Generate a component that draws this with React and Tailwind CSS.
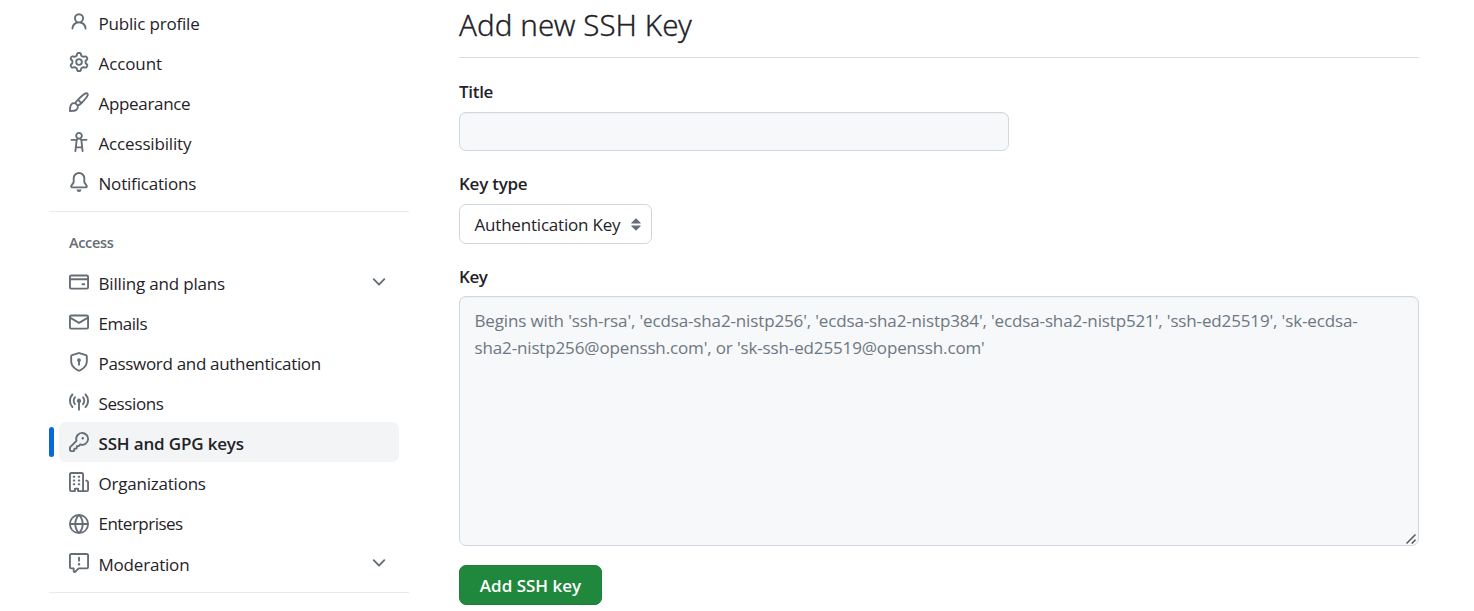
import React from "react";

const PATHS = {
  person: "M10.561 8.073a6.005 6.005 0 0 1 3.432 5.142.75.75 0 1 1-1.498.07 4.5 4.5 0 0 0-8.99 0 .75.75 0 0 1-1.498-.07 6.004 6.004 0 0 1 3.431-5.142 3.999 3.999 0 1 1 5.123 0ZM10.5 5a2.5 2.5 0 1 0-5 0 2.5 2.5 0 0 0 5 0Z",
  gear: "M8 0a8.2 8.2 0 0 1 .701.031C9.444.095 9.99.645 10.16 1.29l.288 1.107c.018.066.079.158.212.224.231.114.454.243.668.386.123.082.233.09.299.071l1.103-.303c.644-.176 1.392.021 1.82.63.27.385.506.792.704 1.218.315.675.111 1.422-.364 1.891l-.814.806c-.049.048-.098.147-.088.294.016.257.016.515 0 .772-.01.147.038.246.088.294l.814.806c.475.469.679 1.216.364 1.891a7.977 7.977 0 0 1-.704 1.217c-.428.61-1.176.807-1.82.63l-1.102-.302c-.067-.019-.177-.011-.3.071a5.909 5.909 0 0 1-.668.386c-.133.066-.194.158-.211.224l-.29 1.106c-.168.646-.715 1.196-1.458 1.26a8.006 8.006 0 0 1-1.402 0c-.743-.064-1.289-.614-1.458-1.26l-.289-1.106c-.018-.066-.079-.158-.212-.224a5.738 5.738 0 0 1-.668-.386c-.123-.082-.233-.09-.299-.071l-1.103.303c-.644.176-1.392-.021-1.82-.63a8.12 8.12 0 0 1-.704-1.218c-.315-.675-.111-1.422.363-1.891l.815-.806c.05-.048.098-.147.088-.294a6.214 6.214 0 0 1 0-.772c.01-.147-.038-.246-.088-.294l-.815-.806C.635 6.045.431 5.298.746 4.623a7.92 7.92 0 0 1 .704-1.217c.428-.61 1.176-.807 1.82-.63l1.102.302c.067.019.177.011.3-.071.214-.143.437-.272.668-.386.133-.066.194-.158.211-.224l.29-1.106C6.009.645 6.556.095 7.299.03 7.53.01 7.764 0 8 0Zm-.571 1.525c-.036.003-.108.036-.137.146l-.289 1.105c-.147.561-.549.967-.998 1.189-.173.086-.34.183-.5.29-.417.278-.97.423-1.529.27l-1.103-.303c-.109-.03-.175.016-.195.045-.22.312-.412.644-.573.99-.014.031-.021.11.059.19l.815.806c.411.406.562.957.53 1.456a4.709 4.709 0 0 0 0 .582c.032.499-.119 1.05-.53 1.456l-.815.806c-.081.08-.073.159-.059.19.162.346.353.677.573.989.02.03.085.076.195.046l1.102-.303c.56-.153 1.113-.008 1.53.27.161.107.328.204.501.29.447.222.85.629.997 1.189l.289 1.105c.029.109.101.143.137.146a6.6 6.6 0 0 0 1.142 0c.036-.003.108-.036.137-.146l.289-1.105c.147-.561.549-.967.998-1.189.173-.086.34-.183.5-.29.417-.278.97-.423 1.529-.27l1.103.303c.109.029.175-.016.195-.045.22-.313.411-.644.573-.99.014-.031.021-.11-.059-.19l-.815-.806c-.411-.406-.562-.957-.53-1.456a4.709 4.709 0 0 0 0-.582c-.032-.499.119-1.05.53-1.456l.815-.806c.081-.08.073-.159.059-.19a6.464 6.464 0 0 0-.573-.989c-.02-.03-.085-.076-.195-.046l-1.102.303c-.56.153-1.113.008-1.53-.27a4.44 4.44 0 0 0-.501-.29c-.447-.222-.85-.629-.997-1.189l-.289-1.105c-.029-.11-.101-.143-.137-.146a6.6 6.6 0 0 0-1.142 0ZM11 8a3 3 0 1 1-6 0 3 3 0 0 1 6 0ZM9.5 8a1.5 1.5 0 1 0-3.001.001A1.5 1.5 0 0 0 9.5 8Z",
  paintbrush: "M11.134 1.535c.7-.509 1.416-.942 2.076-1.155.649-.21 1.463-.267 2.069.34.603.601.568 1.411.368 2.07-.202.668-.624 1.39-1.125 2.096-1.011 1.424-2.496 2.987-3.775 4.249-1.098 1.084-2.132 1.839-3.04 2.3a3.744 3.744 0 0 1-1.055 3.217c-.431.431-1.065.691-1.657.861-.614.177-1.294.287-1.914.357A21.151 21.151 0 0 1 .797 16H.743l.007-.75H.749L.742 16a.75.75 0 0 1-.743-.742l.743-.008-.742.007v-.054a21.25 21.25 0 0 1 .13-2.284c.067-.647.187-1.287.358-1.914.17-.591.43-1.226.86-1.657a3.746 3.746 0 0 1 3.227-1.054c.466-.893 1.225-1.907 2.314-2.982 1.271-1.255 2.833-2.75 4.245-3.777ZM1.62 13.089c-.051.464-.086.929-.104 1.395.466-.018.932-.053 1.396-.104a10.511 10.511 0 0 0 1.668-.309c.526-.151.856-.325 1.011-.48a2.25 2.25 0 1 0-3.182-3.182c-.155.155-.329.485-.48 1.01a10.515 10.515 0 0 0-.309 1.67Zm10.396-10.34c-1.224.89-2.605 2.189-3.822 3.384l1.718 1.718c1.21-1.205 2.51-2.597 3.387-3.833.47-.662.78-1.227.912-1.662.134-.444.032-.551.009-.575h-.001V1.78c-.014-.014-.113-.113-.548.027-.432.14-.995.462-1.655.942Zm-4.832 7.266-.001.001a9.859 9.859 0 0 0 1.63-1.142L7.155 7.216a9.7 9.7 0 0 0-1.161 1.607c.482.302.889.71 1.19 1.192Z",
  accessibility: "M9.923 5.302c.063.063.122.129.178.198H14A.75.75 0 0 1 14 7h-3.3l.578 5.163.362 2.997a.75.75 0 0 1-1.49.18L9.868 13H6.132l-.282 2.34a.75.75 0 0 1-1.49-.18l.362-2.997L5.3 7H2a.75.75 0 0 1 0-1.5h3.9a2.54 2.54 0 0 1 .176-.198 3 3 0 1 1 3.847 0ZM9.2 7.073h-.001a1.206 1.206 0 0 0-2.398 0L6.305 11.5h3.39ZM9.5 3a1.5 1.5 0 1 0-3.001.001A1.5 1.5 0 0 0 9.5 3Z",
  bell: "M8 16a2 2 0 0 0 1.985-1.75c.017-.137-.097-.25-.235-.25h-3.5c-.138 0-.252.113-.235.25A2 2 0 0 0 8 16ZM3 5a5 5 0 0 1 10 0v2.947c0 .05.015.098.042.139l1.703 2.555A1.519 1.519 0 0 1 13.482 13H2.518a1.516 1.516 0 0 1-1.263-2.36l1.703-2.554A.255.255 0 0 0 3 7.947Zm5-3.5A3.5 3.5 0 0 0 4.5 5v2.947c0 .346-.102.683-.294.97l-1.703 2.556a.017.017 0 0 0-.003.01l.001.006c0 .002.002.004.004.006l.006.004.007.001h10.964l.007-.001.006-.004.004-.006.001-.007a.017.017 0 0 0-.003-.01l-1.703-2.554a1.745 1.745 0 0 1-.294-.97V5A3.5 3.5 0 0 0 8 1.5Z",
  card: "M10.75 9a.75.75 0 0 0 0 1.5h1.5a.75.75 0 0 0 0-1.5h-1.5ZM0 3.75C0 2.784.784 2 1.75 2h12.5c.966 0 1.75.784 1.75 1.75v8.5A1.75 1.75 0 0 1 14.25 14H1.75A1.75 1.75 0 0 1 0 12.25ZM14.5 6.5h-13v5.75c0 .138.112.25.25.25h12.5a.25.25 0 0 0 .25-.25Zm0-2.75a.25.25 0 0 0-.25-.25H1.75a.25.25 0 0 0-.25.25V5h13Z",
  mail: "M1.75 2h12.5c.966 0 1.75.784 1.75 1.75v8.5A1.75 1.75 0 0 1 14.25 14H1.75A1.75 1.75 0 0 1 0 12.25v-8.5C0 2.784.784 2 1.75 2ZM1.5 12.251c0 .138.112.25.25.25h12.5a.25.25 0 0 0 .25-.25V5.809L8.38 9.397a.75.75 0 0 1-.76 0L1.5 5.809v6.442Zm13-8.181v-.32a.25.25 0 0 0-.25-.25H1.75a.25.25 0 0 0-.25.25v.32L8 7.88Z",
  shield: "m8.533.133 5.25 1.68A1.75 1.75 0 0 1 15 3.48V7c0 1.566-.32 3.182-1.303 4.682-.983 1.498-2.585 2.813-5.032 3.855a1.697 1.697 0 0 1-1.33 0c-2.447-1.042-4.049-2.357-5.032-3.855C1.32 10.182 1 8.566 1 7V3.48a1.75 1.75 0 0 1 1.217-1.667l5.25-1.68a1.748 1.748 0 0 1 1.066 0Zm-.61 1.429.001.001-5.25 1.68a.251.251 0 0 0-.174.237V7c0 1.36.275 2.666 1.057 3.859.784 1.194 2.121 2.342 4.366 3.298a.196.196 0 0 0 .154 0c2.245-.957 3.582-2.103 4.366-3.297C13.225 9.666 13.5 8.358 13.5 7V3.48a.25.25 0 0 0-.174-.238l-5.25-1.68a.25.25 0 0 0-.153 0ZM9.5 6.5c0 .536-.286 1.032-.75 1.3v2.45a.75.75 0 0 1-1.5 0V7.8A1.5 1.5 0 1 1 9.5 6.5Z",
  broadcast: "M8.75 8.582v5.668a.75.75 0 0 1-1.5 0V8.582a1.75 1.75 0 1 1 1.5 0Zm3.983-7.125a.75.75 0 0 1 1.06.026A7.976 7.976 0 0 1 16 7c0 2.139-.84 4.083-2.207 5.517a.75.75 0 1 1-1.086-1.034A6.474 6.474 0 0 0 14.5 7a6.474 6.474 0 0 0-1.793-4.483.75.75 0 0 1 .026-1.06Zm-9.466 0c.3.286.312.76.026 1.06A6.474 6.474 0 0 0 1.5 7a6.47 6.47 0 0 0 1.793 4.483.75.75 0 0 1-1.086 1.034A7.973 7.973 0 0 1 0 7c0-2.139.84-4.083 2.207-5.517a.75.75 0 0 1 1.06-.026Zm8.556 2.321A4.988 4.988 0 0 1 13 7a4.988 4.988 0 0 1-1.177 3.222.75.75 0 1 1-1.146-.967A3.487 3.487 0 0 0 11.5 7c0-.86-.309-1.645-.823-2.255a.75.75 0 0 1 1.146-.967Zm-6.492.958A3.48 3.48 0 0 0 4.5 7a3.48 3.48 0 0 0 .823 2.255.75.75 0 0 1-1.146.967A4.981 4.981 0 0 1 3 7a4.982 4.982 0 0 1 1.188-3.236.75.75 0 1 1 1.143.972Z",
  key: "M10.5 0a5.499 5.499 0 1 1-1.288 10.848l-.932.932a.749.749 0 0 1-.53.22H7v.75a.749.749 0 0 1-.22.53l-.5.5a.749.749 0 0 1-.53.22H5v.75a.749.749 0 0 1-.22.53l-.5.5a.749.749 0 0 1-.53.22h-2A1.75 1.75 0 0 1 0 14.25v-2c0-.199.079-.389.22-.53l4.932-4.932A5.5 5.5 0 0 1 10.5 0Zm-4 5.5c-.001.431.069.86.205 1.269a.75.75 0 0 1-.181.768L1.5 12.56v1.69c0 .138.112.25.25.25h1.69l.06-.06v-1.19a.75.75 0 0 1 .75-.75h1.19l.06-.06v-1.19a.75.75 0 0 1 .75-.75h1.19l1.023-1.025a.75.75 0 0 1 .768-.18A4 4 0 1 0 6.5 5.5ZM11 6a1 1 0 1 1 0-2 1 1 0 0 1 0 2Z",
  organization: "M1.75 16A1.75 1.75 0 0 1 0 14.25V1.75C0 .784.784 0 1.75 0h8.5C11.216 0 12 .784 12 1.75v12.5c0 .085-.006.168-.018.25h2.268a.25.25 0 0 0 .25-.25V8.285a.25.25 0 0 0-.111-.208l-1.055-.703a.749.749 0 1 1 .832-1.248l1.055.703c.487.325.779.871.779 1.456v5.965A1.75 1.75 0 0 1 14.25 16h-3.5a.766.766 0 0 1-.197-.026c-.099.017-.2.026-.303.026h-3a.75.75 0 0 1-.75-.75V14h-1v1.25a.75.75 0 0 1-.75.75Zm-.25-1.75c0 .138.112.25.25.25H4v-1.25a.75.75 0 0 1 .75-.75h2.5a.75.75 0 0 1 .75.75v1.25h2.25a.25.25 0 0 0 .25-.25V1.75a.25.25 0 0 0-.25-.25h-8.5a.25.25 0 0 0-.25.25ZM3.75 6h.5a.75.75 0 0 1 0 1.5h-.5a.75.75 0 0 1 0-1.5ZM3 3.75A.75.75 0 0 1 3.75 3h.5a.75.75 0 0 1 0 1.5h-.5A.75.75 0 0 1 3 3.75Zm4 3A.75.75 0 0 1 7.75 6h.5a.75.75 0 0 1 0 1.5h-.5A.75.75 0 0 1 7 6.75ZM7.75 3h.5a.75.75 0 0 1 0 1.5h-.5a.75.75 0 0 1 0-1.5ZM3 9.75A.75.75 0 0 1 3.75 9h.5a.75.75 0 0 1 0 1.5h-.5A.75.75 0 0 1 3 9.75ZM7.75 9h.5a.75.75 0 0 1 0 1.5h-.5a.75.75 0 0 1 0-1.5Z",
  globe: "M8 0a8 8 0 1 1 0 16A8 8 0 0 1 8 0ZM5.78 8.75a9.64 9.64 0 0 0 1.363 4.177c.255.426.542.832.857 1.215.245-.296.551-.705.857-1.215A9.64 9.64 0 0 0 10.22 8.75Zm4.44-1.5a9.64 9.64 0 0 0-1.363-4.177c-.307-.51-.612-.919-.857-1.215a9.927 9.927 0 0 0-.857 1.215A9.64 9.64 0 0 0 5.78 7.25Zm-5.944 1.5H1.543a6.507 6.507 0 0 0 4.666 5.5c-.123-.181-.24-.365-.352-.552-.715-1.192-1.437-2.874-1.581-4.948Zm-2.733-1.5h2.733c.144-2.074.866-3.756 1.58-4.948.12-.197.237-.381.353-.552a6.507 6.507 0 0 0-4.666 5.5Zm10.181 1.5c-.144 2.074-.866 3.756-1.58 4.948-.12.197-.237.381-.353.552a6.507 6.507 0 0 0 4.666-5.5Zm2.733-1.5a6.507 6.507 0 0 0-4.666-5.5c.123.181.24.365.353.552.714 1.192 1.436 2.874 1.58 4.948Z",
  report: "M0 1.75C0 .784.784 0 1.75 0h12.5C15.216 0 16 .784 16 1.75v9.5A1.75 1.75 0 0 1 14.25 13H8.06l-2.573 2.573A1.458 1.458 0 0 1 3 14.543V13H1.75A1.75 1.75 0 0 1 0 11.25Zm1.75-.25a.25.25 0 0 0-.25.25v9.5c0 .138.112.25.25.25h2a.75.75 0 0 1 .75.75v2.19l2.72-2.72a.749.749 0 0 1 .53-.22h6.5a.25.25 0 0 0 .25-.25v-9.5a.25.25 0 0 0-.25-.25Zm7 2.25v2.5a.75.75 0 0 1-1.5 0v-2.5a.75.75 0 0 1 1.5 0ZM9 9a1 1 0 1 1-2 0 1 1 0 0 1 2 0Z",
  chevron: "M12.78 5.22a.749.749 0 0 1 0 1.06l-4.25 4.25a.749.749 0 0 1-1.06 0L3.22 6.28a.749.749 0 1 1 1.06-1.06L8 8.939l3.72-3.719a.749.749 0 0 1 1.06 0Z",
};

function Icon({ name, className = "" }) {
  return (
    <svg viewBox="0 0 16 16" className={`size-5 shrink-0 fill-[#656d76] ${className}`} aria-hidden="true">
      <path d={PATHS[name]} />
    </svg>
  );
}

const PROFILE_ITEMS = [
  { icon: "person", label: "Public profile", tracking: "tracking-[-0.18px]" },
  { icon: "gear", label: "Account", tracking: "tracking-[-0.1px]" },
  { icon: "paintbrush", label: "Appearance", tracking: "tracking-[-0.33px]" },
  { icon: "accessibility", label: "Accessibility", tracking: "tracking-[-0.16px]" },
  { icon: "bell", label: "Notifications", tracking: "tracking-[-0.19px]" },
];

const ACCESS_ITEMS = [
  { icon: "card", label: "Billing and plans", tracking: "tracking-[-0.18px]", expandable: true },
  { icon: "mail", label: "Emails", tracking: "tracking-[-0.45px]" },
  { icon: "shield", label: "Password and authentication", tracking: "tracking-[-0.32px]" },
  { icon: "broadcast", label: "Sessions", tracking: "tracking-[-0.38px]" },
  { icon: "key", label: "SSH and GPG keys", tracking: "tracking-[-0.16px]", active: true },
  { icon: "organization", label: "Organizations", tracking: "tracking-[-0.22px]" },
  { icon: "globe", label: "Enterprises", tracking: "tracking-[-0.52px]", iconClass: "mt-1" },
  { icon: "report", label: "Moderation", tracking: "tracking-[-0.2px]", expandable: true, rowClass: "mt-px" },
];

function NavItem({ icon, label, tracking, expandable, active, iconClass, rowClass = "" }) {
  return (
    <li className={`flex ${rowClass}`}>
      <span className={`my-[5px] mr-[5px] w-[5px] rounded-full ${active ? "bg-[#0969da]" : ""}`} />
      <a
        className={`flex h-10 w-[340px] items-center rounded-[7px] px-2.5 ${
          active ? "bg-[#f3f4f6] font-semibold" : ""
        }`}
      >
        <Icon name={icon} className={iconClass} />
        <span className={`ml-[9.5px] flex-1 pt-[3px] leading-6 ${tracking}`}>{label}</span>
        {expandable && <Icon name="chevron" />}
      </a>
    </li>
  );
}

export default function App() {
  return (
    <div className="flex h-[611px] w-full gap-[50px] overflow-hidden bg-white pl-[49px] font-['Open_Sans','Noto_Sans',sans-serif] text-[17px] text-[#1f2328]">
      <nav className="w-[360px] shrink-0 pt-0.5">
        <ul className="border-b border-[#e8eaed] pb-[9px]">
          {PROFILE_ITEMS.map((item) => (
            <NavItem key={item.label} {...item} />
          ))}
        </ul>
        <h2 className="flex h-[50px] items-center pt-3 pl-5 text-[14.5px] font-semibold tracking-[-0.35px] text-[#656d76]">
          Access
        </h2>
        <ul className="border-b border-[#e8eaed] pb-[9px]">
          {ACCESS_ITEMS.map((item) => (
            <NavItem key={item.label} {...item} />
          ))}
        </ul>
      </nav>

      <main className="w-[960px] shrink-0">
        <h1 className="h-[58px] border-b border-[#d8dee4] pt-[3px] font-['Noto_Sans',sans-serif] text-[29.5px] leading-[43px] font-light tracking-[0.08px] [-webkit-text-stroke:0.3px_#1f2328]">
          Add new SSH Key
        </h1>
        <form className="flex flex-col items-start">
          <label htmlFor="title" className="mt-[21px] leading-[25px] font-semibold tracking-[-0.3px]">
            Title
          </label>
          <input
            id="title"
            className="mt-2 h-[39px] w-[550px] rounded-[7px] border border-[#d0d7de] bg-[#f6f8fa] px-[15px] shadow-[inset_0_1px_0_rgba(208,215,222,0.2)]"
          />
          <label htmlFor="key-type" className="mt-5 leading-[25px] font-semibold tracking-[-0.25px]">
            Key type
          </label>
          <button
            id="key-type"
            type="button"
            className="mt-2 flex h-10 w-[193px] items-center justify-between rounded-[7px] border border-[#d0d7de] bg-white pr-2.5 pl-[14.5px]"
          >
            <span className="pt-px leading-6 tracking-[-0.2px]">Authentication Key</span>
            <svg viewBox="0 0 10 13" className="h-[13px] w-2.5 fill-[#656d76]" aria-hidden="true">
              <path d="M.4 4.8 4.7.5a.4.4 0 0 1 .6 0l4.3 4.3c.3.3.1.7-.2.7H.6c-.3 0-.5-.4-.2-.7ZM.4 8.2l4.3 4.3c.2.2.4.2.6 0l4.3-4.3c.3-.3.1-.7-.2-.7H.6c-.3 0-.5.4-.2.7Z" />
            </svg>
          </button>
          <label htmlFor="key" className="mt-5 leading-[25px] font-semibold tracking-[-0.4px]">
            Key
          </label>
          <div className="relative mt-[7px] h-[250px] w-[960px]">
            <textarea
              id="key"
              className="block size-full resize-none rounded-[7px] border border-[#d0d7de] bg-[#f6f8fa] py-2.5 pr-6 pl-[14.5px] leading-[27px] tracking-[-0.14px] shadow-[inset_0_1px_0_rgba(208,215,222,0.2)] placeholder:text-[#6e7781]"
              placeholder="Begins with 'ssh-rsa', 'ecdsa-sha2-nistp256', 'ecdsa-sha2-nistp384', 'ecdsa-sha2-nistp521', 'ssh-ed25519', 'sk-ecdsa-sha2-nistp256@openssh.com', or 'sk-ssh-ed25519@openssh.com'"
            />
            <svg
              viewBox="0 0 10 10"
              className="pointer-events-none absolute right-[3px] bottom-0.5 size-2.5 fill-none stroke-[#55585c] stroke-[1.5]"
              aria-hidden="true"
            >
              <path d="M.5 9.5 9.5.5M5.7 9.6l3.9-3.9" />
            </svg>
          </div>
          <button
            type="button"
            className="mt-[19px] h-10 w-[143px] rounded-[7px] border border-[#1f7f3a] bg-[#1f883d] pt-px leading-[25px] font-semibold text-white"
          >
            Add SSH key
          </button>
        </form>
      </main>
    </div>
  );
}
